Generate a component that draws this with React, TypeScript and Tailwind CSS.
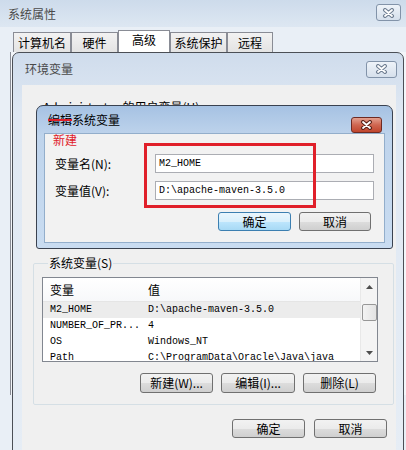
import clsx from 'clsx'

const CJK = "[font-family:'Noto_Sans_CJK_SC','Liberation_Sans',sans-serif]"
const MONO = "[font-family:'Liberation_Mono','Noto_Sans_CJK_SC',monospace]"

const Btn = ({ label, className, primary }: { label: string; className: string; primary?: boolean }) => (
  <div
    className={clsx(
      'flex h-[19px] items-center justify-center rounded-[3px] border text-[12px] leading-none text-black',
      primary
        ? 'border-[#3c7fb1] bg-[linear-gradient(#eaf6fd,#d9f0fc_50%,#bee6fd_50%,#a7d9f5)]'
        : 'border-[#707070] bg-[linear-gradient(#f2f2f2,#ebebeb_50%,#dddddd_50%,#cfcfcf)]',
      className
    )}
  >
    {label}
  </div>
)

const CloseX = ({ fill }: { fill: string }) => (
  <svg width="13" height="10" viewBox="0 0 13 10">
    <path d="M3 2 L10 8 M10 2 L3 8" stroke={fill} strokeWidth="4" strokeLinecap="round" />
    <path d="M3 2 L10 8 M10 2 L3 8" stroke="#fff" strokeWidth="1.8" strokeLinecap="round" />
  </svg>
)

const CloseBtn = ({ className }: { className: string }) => (
  <div
    className={clsx(
      'flex items-center justify-center rounded-[3px] border border-[#8293a9] bg-[linear-gradient(#eef3f9,#d6e0ec)]',
      className
    )}
  >
    <CloseX fill="#6f7e92" />
  </div>
)

const rows = [
  ['M2_HOME', 'D:\\apache-maven-3.5.0'],
  ['NUMBER_OF_PR...', '4'],
  ['OS', 'Windows_NT'],
  ['Path', 'C:\\ProgramData\\Oracle\\Java\\java']
]

const tabs = [
  { t: '计算机名', w: 'w-[58px]' },
  { t: '硬件', w: 'w-[47px]' },
  { t: '高级', w: 'w-[52px]', on: true },
  { t: '系统保护', w: 'w-[57px]' },
  { t: '远程', w: 'w-[46px]' }
]

export default function App() {
  return (
    <div className={clsx('relative h-[450px] w-[406px] overflow-hidden bg-[#e9eff6] text-[12px]', CJK)}>
      {/* 系统属性 */}
      <div className="flex h-full flex-col">
        <div className="flex h-[27px] shrink-0 items-center justify-between bg-[linear-gradient(#cddbeb,#dde7f2)] pl-[8px] pr-[5px]">
          <span className="text-[12px] leading-none text-[#4a4a4a]">系统属性</span>
          <CloseBtn className="mt-[-2px] h-[17px] w-[25px]" />
        </div>
        <div className="flex h-[25px] shrink-0 items-end pl-[13px]">
          {tabs.map((tab) => (
            <div
              key={tab.t}
              className={clsx(
                'flex items-center border border-b-0 border-[#898c95] leading-none text-black',
                tab.w,
                tab.on
                  ? 'h-[22px] justify-center bg-white pb-[4px]'
                  : 'h-[20px] justify-center bg-[linear-gradient(#f2f2f2,#e3e3e3)]'
              )}
            >
              {tab.t}
            </div>
          ))}
        </div>
        <div className="ml-[10px] h-[343px] border-l border-[#898c95] bg-[#f3f6fa]" />
      </div>

      {/* 环境变量 */}
      <div className="absolute left-[12px] top-[52px] flex h-[410px] w-[392px] flex-col rounded-t-[7px] border border-[#4b4f56] bg-[linear-gradient(#cfdcec,#dfe8f3_60px,#e6edf5)]">
        <div className="flex h-[32px] shrink-0 items-center justify-between pl-[12px] pr-[6px]">
          <span className="leading-none text-[#4a4a4a]">环境变量</span>
          <CloseBtn className="h-[17px] w-[31px]" />
        </div>
        <div className="ml-[9px] mr-[7px] flex flex-1 flex-col bg-[#f0f0f0]">
          <div className="h-[170px] shrink-0 pl-[21px] pt-[13px]">
            <span className="leading-[14px] text-black">Administrator 的用户变量(U)</span>
          </div>
          <fieldset className="ml-[11px] w-[361px] rounded-[2px] border border-[#d5dfe5] pb-[11px] pl-[8px]">
            <legend className="ml-[6px] h-[16px] px-[1px] leading-[16px] text-black">系统变量(S)</legend>
            <div className="mt-[6px] flex h-[85px] w-[336px] overflow-hidden border border-[#828790] bg-white">
              <div className="flex flex-1 flex-col overflow-hidden">
                <div className="flex h-[24px] shrink-0 items-center border-b border-[#e5e5e5] bg-[linear-gradient(#ffffff,#f7f8fa)] pl-[7px] text-[12px] leading-none text-black">
                  <span className="w-[98px]">变量</span>
                  <span>值</span>
                </div>
                {rows.map((r, i) => (
                  <div
                    key={r[0]}
                    className={clsx(
                      'flex h-[16px] shrink-0 items-center pl-[7px] text-[10px] leading-none text-black',
                      MONO,
                      i === 0 && 'bg-[#ececec]'
                    )}
                  >
                    <span className="w-[98px] whitespace-nowrap">{r[0]}</span>
                    <span className="whitespace-nowrap">{r[1]}</span>
                  </div>
                ))}
              </div>
              <div className="flex w-[17px] shrink-0 flex-col items-center border-l border-[#e8e8e8] bg-[#f4f4f4]">
                <div className="flex h-[17px] w-full items-center justify-center">
                  <svg width="7" height="4" viewBox="0 0 7 4">
                    <path d="M0 4 L3.5 0 L7 4 Z" fill="#4d4d4d" />
                  </svg>
                </div>
                <div className="mt-[9px] h-[17px] w-[15px] rounded-[2px] border border-[#979797] bg-[linear-gradient(90deg,#f3f3f3,#e3e3e3)]" />
                <div className="flex-1" />
                <div className="flex h-[17px] w-full items-center justify-center">
                  <svg width="7" height="4" viewBox="0 0 7 4">
                    <path d="M0 0 L7 0 L3.5 4 Z" fill="#4d4d4d" />
                  </svg>
                </div>
              </div>
            </div>
            <div className="mt-[11px] flex w-[334px] justify-end gap-[8px]">
              <Btn label="新建(W)..." className="h-[20px] w-[73px]" />
              <Btn label="编辑(I)..." className="h-[20px] w-[74px]" />
              <Btn label="删除(L)" className="h-[20px] w-[73px]" />
            </div>
          </fieldset>
          <div className="mt-[14px] flex justify-end gap-[9px] pr-[9px]">
            <Btn label="确定" className="w-[73px]" />
            <Btn label="取消" className="w-[73px]" />
          </div>
        </div>
      </div>

      {/* 编辑系统变量 */}
      <div className="absolute left-[36px] top-[105px] flex h-[144px] w-[357px] flex-col rounded-t-[7px] rounded-b-[3px] border border-[#3a4250] bg-[linear-gradient(#a6c2e3,#bfd4ec_30px,#c9dcf1)] px-[7px] pb-[5px]">
        <div className="flex h-[27px] shrink-0 items-center justify-between pl-[4px] pr-[3px]">
          <span className="leading-none text-black">
            <span className="line-through decoration-[#e0202a] decoration-2">编辑</span>系统变量
          </span>
          <div className="mt-[10px] flex h-[16px] w-[31px] items-center justify-center rounded-[3px] border border-[#6e2a22] bg-[linear-gradient(#e3a08f,#cf6650_50%,#c0452d)]">
            <CloseX fill="#5a2218" />
          </div>
        </div>
        <div className="flex flex-1 flex-col border border-[#93aecb] bg-[#f2f2f2]">
          <div className="h-[14px] pl-[8px] leading-[12px] text-[#e0202a]">新建</div>
          <div className="mt-[6px] flex h-[19px] items-center">
            <span className="w-[110px] pl-[10px] leading-none text-black">变量名(N):</span>
            <div className={clsx('flex h-[19px] w-[219px] items-center border border-[#abadb3] bg-white pl-[3px] text-[10px] leading-none text-black', MONO)}>
              M2_HOME
            </div>
          </div>
          <div className="mt-[8px] flex h-[19px] items-center">
            <span className="w-[110px] pl-[10px] leading-none text-black">变量值(V):</span>
            <div className={clsx('flex h-[19px] w-[219px] items-center border border-[#abadb3] bg-white pl-[3px] text-[10px] leading-none text-black', MONO)}>
              D:\apache-maven-3.5.0
            </div>
          </div>
          <div className="mt-[12px] flex justify-end gap-[8px] pr-[13px]">
            <Btn label="确定" className="w-[73px]" primary />
            <Btn label="取消" className="w-[72px]" />
          </div>
        </div>
      </div>

      {/* red annotation box */}
      <div className="absolute left-[144px] top-[143px] h-[65px] w-[172px] border-[3px] border-[#e0202a]" />
    </div>
  )
}
